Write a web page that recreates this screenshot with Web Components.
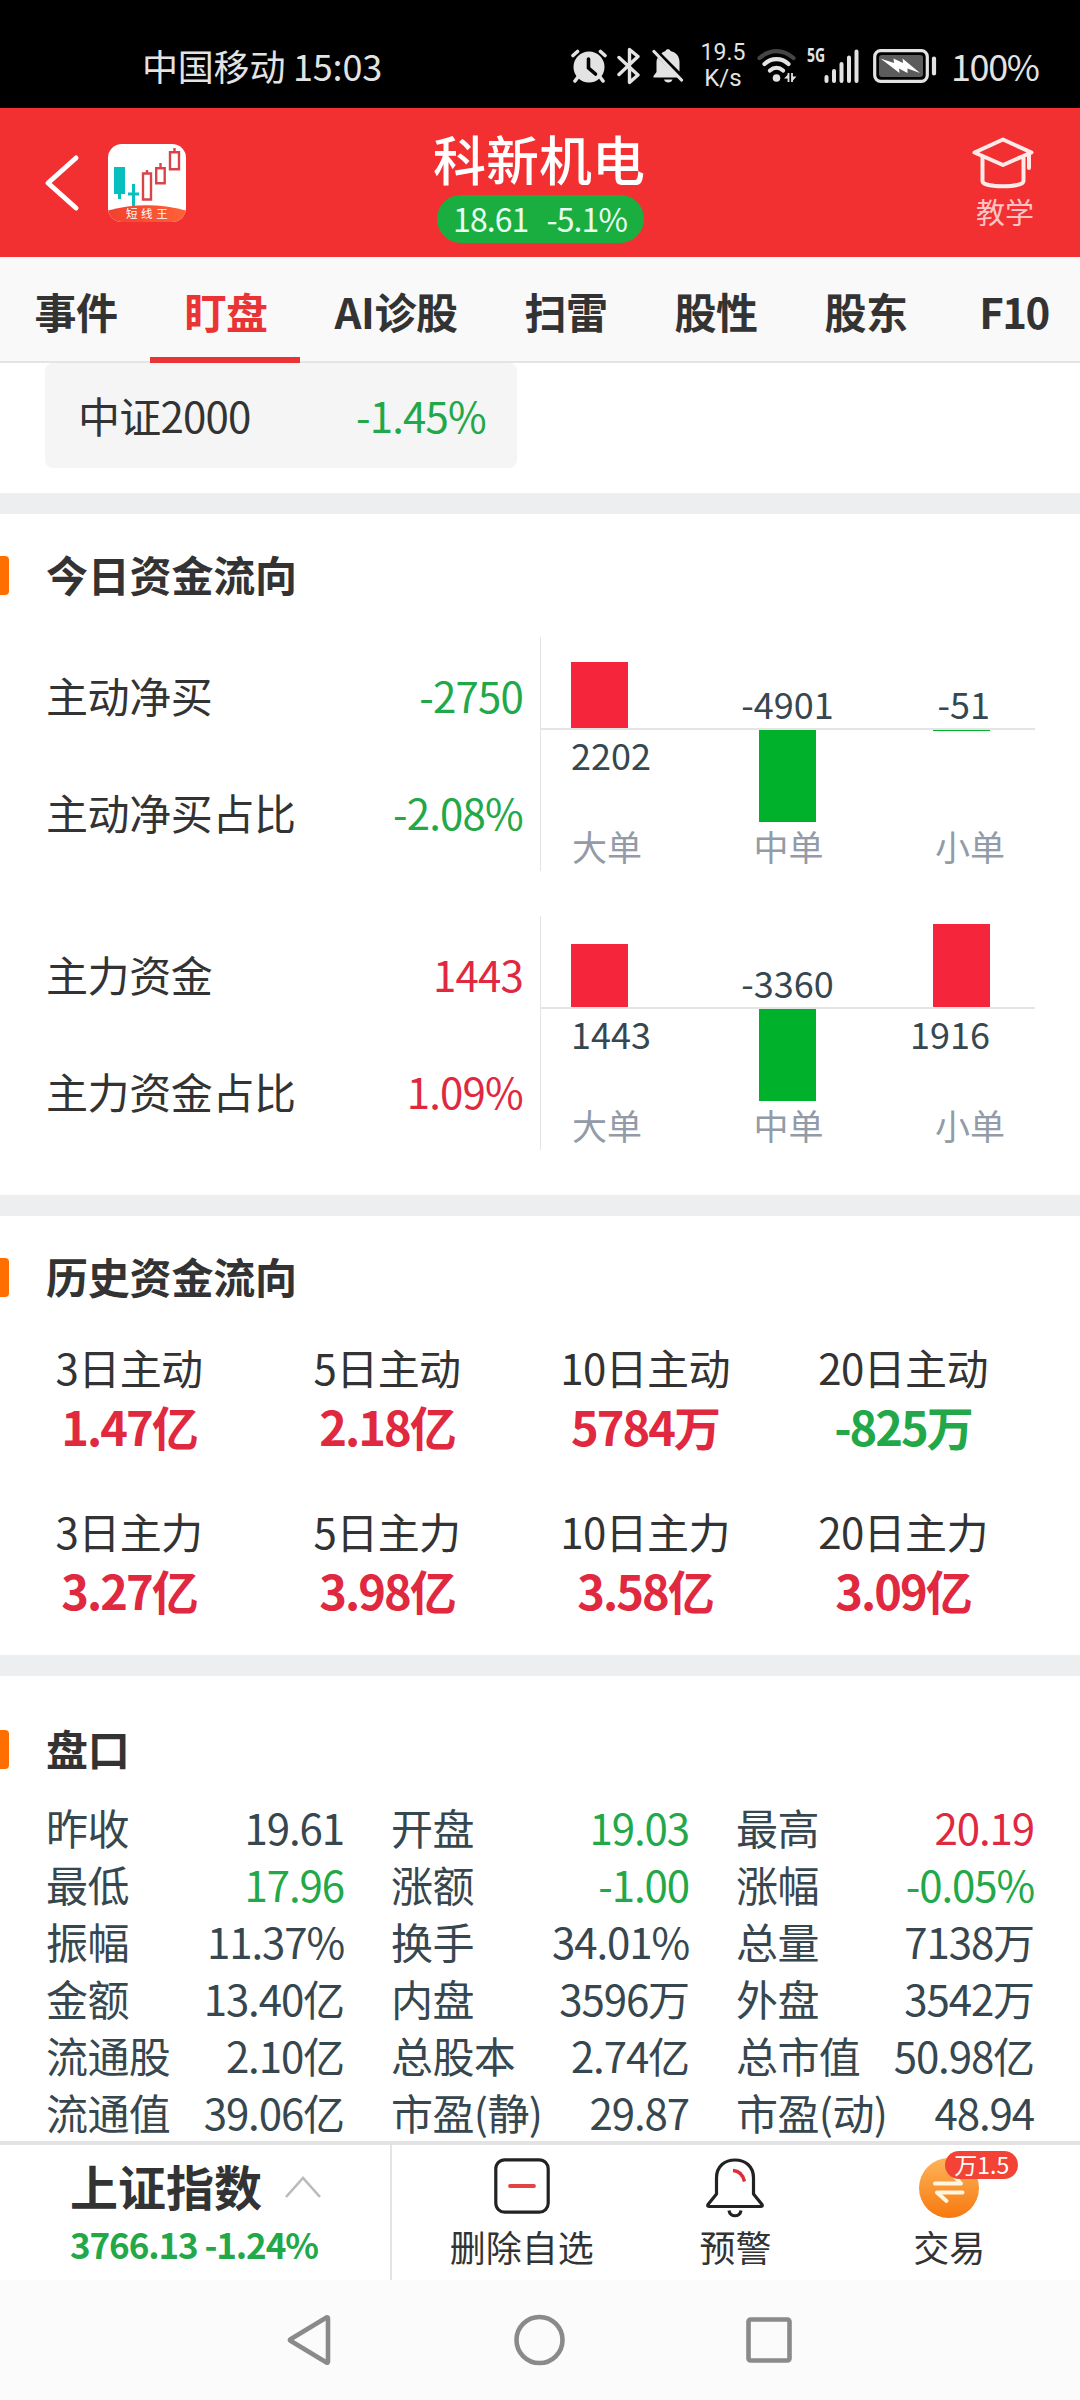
<!DOCTYPE html>
<html lang="zh-CN">
<head>
<meta charset="utf-8">
<title>科新机电</title>
<style>
  html, body {
    margin: 0;
    padding: 0;
  }

  body {
    width: 1080px;
    height: 2400px;
    display: flex;
    flex-direction: column;
    overflow: hidden;
    background: #fff;
    color: #333;
    font-family: "Noto Sans CJK SC", sans-serif;
    font-size: 42px;
    --up: #e0283f;
    --down: #22a848;
    --line: #e4e4e4;
  }

  main {
    height: 1778px;
    flex: none;
    overflow: hidden;
  }

  .history {
    display: grid;
    grid-template-columns: repeat(4, 258px);
    row-gap: 44px;
    padding-top: 39px;
  }

  .quotes {
    display: grid;
    grid-template-columns: repeat(3, 300px);
    column-gap: 45px;
    padding: 29px 45px 0;
  }

  .flows {
    display: flex;
    flex-direction: column;
    gap: 45px;
    padding: 42px 45px 0;
  }
</style>
</head>
<body>
<status-bar></status-bar>
<page-header name="科新机电" price="18.61" change="-5.1%"></page-header>
<tab-bar>
  <tab-item>事件</tab-item>
  <tab-item active>盯盘</tab-item>
  <tab-item wide>AI诊股</tab-item>
  <tab-item>扫雷</tab-item>
  <tab-item>股性</tab-item>
  <tab-item>股东</tab-item>
  <tab-item style="letter-spacing: -1.5px; padding-right: 4px">F10</tab-item>
</tab-bar>
<main>
  <index-card name="中证2000" value="-1.45%"></index-card>
  <section-block heading="今日资金流向" style="height: 681px">
    <div class="flows">
      <flow-panel>
        <flow-row name="主动净买" value="-2750"></flow-row>
        <flow-row name="主动净买占比" value="-2.08%"></flow-row>
        <flow-chart slot="chart" values="2202,-4901,-51" heights="66,92,1"></flow-chart>
      </flow-panel>
      <flow-panel>
        <flow-row name="主力资金" value="1443"></flow-row>
        <flow-row name="主力资金占比" value="1.09%"></flow-row>
        <flow-chart slot="chart" values="1443,-3360,1916" heights="63,92,83"></flow-chart>
      </flow-panel>
    </div>
  </section-block>
  <section-block heading="历史资金流向" style="height: 439px">
    <div class="history">
      <history-item name="3日主动" value="1.47亿"></history-item>
      <history-item name="5日主动" value="2.18亿"></history-item>
      <history-item name="10日主动" value="5784万"></history-item>
      <history-item name="20日主动" value="-825万"></history-item>
      <history-item name="3日主力" value="3.27亿"></history-item>
      <history-item name="5日主力" value="3.98亿"></history-item>
      <history-item name="10日主力" value="3.58亿"></history-item>
      <history-item name="20日主力" value="3.09亿"></history-item>
    </div>
  </section-block>
  <section-block heading="盘口" style="--head-top: 54px">
    <div class="quotes">
      <quote-item name="昨收" value="19.61"></quote-item>
      <quote-item name="开盘" value="19.03" trend="down"></quote-item>
      <quote-item name="最高" value="20.19" trend="up"></quote-item>
      <quote-item name="最低" value="17.96" trend="down"></quote-item>
      <quote-item name="涨额" value="-1.00" trend="down"></quote-item>
      <quote-item name="涨幅" value="-0.05%" trend="down"></quote-item>
      <quote-item name="振幅" value="11.37%"></quote-item>
      <quote-item name="换手" value="34.01%"></quote-item>
      <quote-item name="总量" value="7138万"></quote-item>
      <quote-item name="金额" value="13.40亿"></quote-item>
      <quote-item name="内盘" value="3596万"></quote-item>
      <quote-item name="外盘" value="3542万"></quote-item>
      <quote-item name="流通股" value="2.10亿"></quote-item>
      <quote-item name="总股本" value="2.74亿"></quote-item>
      <quote-item name="总市值" value="50.98亿"></quote-item>
      <quote-item name="流通值" value="39.06亿"></quote-item>
      <quote-item name="市盈(静)" value="29.87"></quote-item>
      <quote-item name="市盈(动)" value="48.94"></quote-item>
    </div>
  </section-block>
</main>
<bottom-bar></bottom-bar>
<nav-bar></nav-bar>

<script>
// width, height and body of every icon
const icons = {
  alarm: [36, 34, `
    <circle cx="18" cy="18" r="15.500" fill="#e3e3e3"/>
    <path d="M2 6.500 6.500 2.500M29.500 2.500 34 6.500" stroke="#e3e3e3" stroke-width="3.600" stroke-linecap="round"/>
    <path d="M7 28 4 32M29 28l3 4" stroke="#e3e3e3" stroke-width="3.600" stroke-linecap="round"/>
    <path d="M17.500 10v9l7 6" stroke="#000" stroke-width="3.600" stroke-linecap="round" fill="none"/>`],
  bluetooth: [24, 38, `
    <path d="M2 10.500 21 28 12.500 35.500V2.500L21 9.500 2 27.500" stroke="#e3e3e3" stroke-width="3.400" stroke-linejoin="round" stroke-linecap="round" fill="none"/>`],
  mute: [32, 36, `
    <path d="M1.500 29.500V28L4.500 24V14.500c0-2 .5-3.500 1.200-5L26.500 29.500z" fill="#e3e3e3"/>
    <path d="M9.500 5.500C10.500 4 12 3.500 13.500 3 13.800.5 18.200.5 18.500 3 24.500 4.500 27.500 8.500 27.500 14.500v9z" fill="#e3e3e3"/>
    <path d="M12 31.500h8.500c-.8 4-7.700 4-8.500 0z" fill="#e3e3e3"/>
    <path d="M3.500 1.500 31.500 31" stroke="#000" stroke-width="2.500"/>
    <path d="M2 3.500 29.500 32" stroke="#e3e3e3" stroke-width="3.200" stroke-linecap="round"/>`],
  wifi: [42, 36, `
    <path d="M2.500 10C13 .7 26 .7 36.500 10" stroke="#454545" stroke-width="4.200" fill="none" stroke-linecap="round"/>
    <path d="M7.500 16c7-6.500 17-6.500 24 0M13 22.500c4-3.500 9-3.500 13 0" stroke="#e3e3e3" stroke-width="4.200" fill="none" stroke-linecap="round"/>
    <circle cx="19.500" cy="30" r="3.800" fill="#e3e3e3"/>
    <path d="M31.500 25v9M35 25v9" stroke="#e3e3e3" stroke-width="1.800"/>
    <path d="M31.500 26v4.500H27zM35 33.500V28.500h4.500z" fill="#e3e3e3"/>`],
  signal: [36, 35, `
    <path d="M2.500 28v4M10 22v10M17.500 15v17M25 8.500V32M32.500 2.500V32" stroke="#e3e3e3" stroke-width="4" stroke-linecap="round"/>`],
  battery: [64, 34, `
    <rect x="1.700" y="1.700" width="52.600" height="30.600" rx="6" fill="none" stroke="#e3e3e3" stroke-width="3.200"/>
    <rect x="6" y="6" width="44" height="22" rx="3" fill="#5c5c5c"/>
    <path d="M7.500 9.500 21 14 20.500 9.500 30 14 29.500 9.500 47 24 34.500 19.500V24l-8.500-4.500.5 4.500z" fill="#fff"/>
    <path d="M61 9.500v15" stroke="#e3e3e3" stroke-width="4.200" stroke-linecap="round"/>`],
  back: [36, 58, `
    <path d="M32 4 4 29l28 25" stroke="#fff" stroke-width="5" fill="none" stroke-linecap="round" stroke-linejoin="round"/>`],
  logo: [78, 78, `
    <defs>
      <clipPath id="r"><rect width="78" height="78" rx="14"/></clipPath>
      <linearGradient id="g"><stop offset="0" stop-color="#f2402f"/><stop offset="1" stop-color="#ff6236"/></linearGradient>
    </defs>
    <g clip-path="url(#r)">
      <rect width="78" height="78" fill="#fff"/>
      <path d="M6 23h11v27h-4v5h-3v-5H6zM24 40h3v8.500h4v3h-4V63h-3V51.500h-4v-3h4z" fill="#08bfc0"/>
      <path d="M0 66.500Q39 56 78 66.500V78H0z" fill="url(#g)"/>
      <path d="M35 29.500h8v26h-8zM39 29v-3M48.200 24.200h8.500v15h-8.500zM52.500 24v-5M62 8.200h9v17h-9zM66.500 8V4" stroke="#d94448" stroke-width="2.400" fill="none"/>
      <text x="18" y="74" font-size="11.500" letter-spacing="3.600" fill="#fff">短线王</text>
    </g>`],
  teach: [62, 52, `
    <path d="M2.500 15.500 31 2.500l28.500 13L31 28z M10.500 20v24c0 7 41 7 41 0V20M57 17v14" stroke="#ffeaea" stroke-width="4" fill="none" stroke-linejoin="round" stroke-linecap="round"/>`],
  up: [38, 24, `
    <path d="M2 22 19 3l17 19" stroke="#bbb" stroke-width="2.600" fill="none"/>`],
  remove: [56, 56, `
    <rect x="1.800" y="1.800" width="52.400" height="52.400" rx="9" fill="none" stroke="#222" stroke-width="3.200"/>
    <path d="M16 28h24" stroke="#e24444" stroke-width="3.800" stroke-linecap="round"/>`],
  bell: [58, 60, `
    <path d="M10.500 36V20C10.500 8 19 2 29 2S47.500 8 47.500 20V36l8.500 10.500q1 2-1.500 2H3.500q-2.500 0-1.500-2z" stroke="#222" stroke-width="3.200" fill="none" stroke-linejoin="round"/>
    <path d="M23 52.500c1 7 11 7 12 0" stroke="#222" stroke-width="3.200" fill="none"/>
    <path d="M27 12.500q9 .5 11.500 11" stroke="#e02c33" stroke-width="3.400" fill="none"/>`],
  trade: [60, 60, `
    <defs><linearGradient id="o" x2="0" y2="1"><stop offset="0" stop-color="#fdb45a"/><stop offset="1" stop-color="#f7780f"/></linearGradient></defs>
    <circle cx="30" cy="30" r="30" fill="url(#o)"/>
    <path d="M16 25.500H42L34 17M43.500 34.500H18l9.500 8.500" stroke="#fff6e0" stroke-width="4" fill="none" stroke-linecap="round" stroke-linejoin="round"/>`],
  navBack: [44, 52, `
    <path d="M39.500 3.500 3.500 25.200Q2.200 26 3.500 26.800l36 21.700q1.500.5 1.500-1v-43q0-1.500-1.500-1z" stroke="#8a8a8a" stroke-width="4.600" fill="none" stroke-linejoin="round"/>`],
  navHome: [52, 52, `
    <circle cx="26.500" cy="26" r="23" stroke="#8a8a8a" stroke-width="4.600" fill="none"/>`],
  navRecent: [46, 46, `
    <rect x="2.500" y="2.500" width="41" height="41" rx="2" stroke="#8a8a8a" stroke-width="4.600" fill="none"/>`],
};

// "-" in front of a number means it fell
const trendColor = value => value.startsWith("-") ? "var(--down)" : "var(--up)";

class BaseElement extends HTMLElement {
  constructor() {
    super();
    this.attachShadow({mode: "open"});
  }

  connectedCallback() {
    this.shadowRoot.innerHTML = this.render();
  }

  attr(name) {
    return this.getAttribute(name) || "";
  }
}

class UiIcon extends BaseElement {
  render() {
    const [w, h, body] = icons[this.attr("name")];
    return `
      <style>
        :host { display: block; flex: none; width: ${w}px; height: ${h}px; }
        svg { display: block; }
      </style>
      <svg width="${w}" height="${h}" viewBox="0 0 ${w} ${h}" fill="none">${body}</svg>`;
  }
}

class StatusBar extends BaseElement {
  render() {
    return `
      <style>
        :host {
          display: flex;
          flex: none;
          box-sizing: border-box;
          height: 108px;
          padding: 24px 40px 0 142px;
          align-items: center;
          background: #000;
          color: #e3e3e3;
          font-size: 36px;
          line-height: 1;
        }
        .carrier { width: 429px; white-space: pre; padding-bottom: 3px; box-sizing: border-box; letter-spacing: -0.2px; }
        .speed {
          width: 46px;
          margin-left: 16px;
          text-align: center;
          font: 400 24px/24px Roboto, sans-serif;
        }
        .speed div { height: 24px; }
        .speed div:first-child { font-size: 23px; line-height: 22px; }
        .net {
          align-self: flex-start;
          width: 18px;
          margin: 21px 0 0 8px;
          font: 700 20px/20px "Open Sans", sans-serif;
        }
        .net span { display: block; width: 25px; transform: scaleX(0.7); transform-origin: 0 0; }
        .percent { margin-left: 14px; padding-bottom: 2px; letter-spacing: -1.4px; }
      </style>
      <div class="carrier">中国移动 15:03</div>
      <ui-icon name="alarm"></ui-icon>
      <ui-icon name="bluetooth" style="margin-left: 10px"></ui-icon>
      <ui-icon name="mute" style="margin-left: 11px"></ui-icon>
      <div class="speed"><div>19.5</div><div>K/s</div></div>
      <ui-icon name="wifi" style="margin-left: 11px"></ui-icon>
      <div class="net"><span>5G</span></div>
      <ui-icon name="signal" style="margin-left: -1px"></ui-icon>
      <ui-icon name="battery" style="margin-left: 13px"></ui-icon>
      <div class="percent">100%</div>`;
  }
}

class PageHeader extends BaseElement {
  render() {
    return `
      <style>
        :host {
          display: grid;
          grid-template-columns: 1fr auto 1fr;
          flex: none;
          height: 149px;
          background: #f23032;
          color: #fff;
        }
        .left { display: flex; align-items: center; gap: 28px; padding: 1px 0 0 44px; }
        .center { display: flex; flex-direction: column; align-items: center; }
        .name { margin: 18px 2px 0 0; font-size: 53px; line-height: 64px; font-weight: 500; }
        .pill {
          display: flex;
          box-sizing: border-box;
          gap: 18px;
          justify-content: center;
          width: 207px;
          height: 48px;
          margin-top: 5px;
          border-radius: 24px;
          background: #19ae3f;
          font-size: 32px;
          line-height: 46px;
          letter-spacing: -0.9px;
          color: #e9fff0;
        }
        .right { display: flex; flex-direction: column; align-items: flex-end; padding: 29px 46px 0 0; }
        .teach { margin-top: 3px; font-size: 29px; line-height: 38px; font-weight: 400; color: #fcc4c4; }
      </style>
      <div class="left"><ui-icon name="back"></ui-icon><ui-icon name="logo"></ui-icon></div>
      <div class="center">
        <div class="name">${this.attr("name")}</div>
        <div class="pill"><span>${this.attr("price")}</span><span>${this.attr("change")}</span></div>
      </div>
      <div class="right"><ui-icon name="teach"></ui-icon><div class="teach">教学</div></div>`;
  }
}

class TabBar extends BaseElement {
  render() {
    return `
      <style>
        :host {
          display: flex;
          flex: none;
          box-sizing: border-box;
          height: 106px;
          overflow: hidden;
          background: #f9f9f9;
          box-shadow: inset 0 -2px #e4e4e4;
        }
      </style>
      <slot></slot>`;
  }
}

class TabItem extends BaseElement {
  render() {
    return `
      <style>
        :host {
          display: block;
          flex: none;
          box-sizing: border-box;
          width: 150px;
          height: 106px;
          padding-left: 2px;
          text-align: center;
          font-size: 42px;
          font-weight: 700;
          line-height: 107px;
          letter-spacing: -0.5px;
        }
        :host([wide]) { width: 190px; }
        :host([active]) { color: #e93335; border-bottom: 6px solid #e93335; }
      </style>
      <slot></slot>`;
  }
}

class IndexCard extends BaseElement {
  render() {
    return `
      <style>
        :host { display: block; height: 130px; }
        .card {
          display: flex;
          box-sizing: border-box;
          justify-content: space-between;
          width: 472px;
          height: 105px;
          margin-left: 45px;
          padding: 0 31px 0 33px;
          border-radius: 8px;
          background: #f5f5f5;
          line-height: 103px;
          letter-spacing: -0.8px;
        }
        .value { color: var(--down); }
      </style>
      <div class="card"><span>${this.attr("name")}</span><span class="value">${this.attr("value")}</span></div>`;
  }
}

class SectionBlock extends BaseElement {
  render() {
    return `
      <style>
        :host {
          display: block;
          box-sizing: content-box;
          border-top: 21px solid #edeef0;
        }
        .head { display: flex; padding-top: var(--head-top, 42px); height: 39px; }
        .mark { width: 9px; border-radius: 0 4px 4px 0; background: #ff6f00; }
        .text { margin-left: 37px; font-weight: 700; line-height: 36px; letter-spacing: -0.2px; }
      </style>
      <div class="head"><div class="mark"></div><div class="text">${this.attr("heading")}</div></div>
      <slot></slot>`;
  }
}

class FlowPanel extends BaseElement {
  render() {
    return `
      <style>
        :host { display: flex; height: 234px; }
        .rows { width: 478px; }
        .chart { margin-left: 17px; }
      </style>
      <div class="rows"><slot></slot></div>
      <div class="chart"><slot name="chart"></slot></div>`;
  }
}

class FlowRow extends BaseElement {
  render() {
    const value = this.attr("value");
    return `
      <style>
        :host { display: flex; justify-content: space-between; height: 117px; line-height: 115px; }
        .name { padding-left: 1px; letter-spacing: -0.4px; }
        .value { color: ${trendColor(value)}; letter-spacing: -0.8px; }
      </style>
      <span class="name">${this.attr("name")}</span><span class="value">${value}</span>`;
  }
}

class FlowChart extends BaseElement {
  render() {
    const values = this.attr("values").split(",");
    const heights = this.attr("heights").split(",");
    const bar = i => `<div class="bar" style="height: ${heights[i]}px"></div>`;
    const label = v => `<div class="num">${v}</div>`;
    const rising = v => !v.startsWith("-");
    return `
      <style>
        :host {
          display: block;
          box-sizing: border-box;
          width: 495px;
          height: 234px;
          border-left: 1px solid var(--line);
          color: #37474f;
          font-size: 36px;
          line-height: 50px;
        }
        .band { display: flex; padding-left: 30px; }
        .above { height: 91px; border-bottom: 2px solid var(--line); align-items: flex-end; }
        .below { height: 92px; }
        .col { display: flex; flex-direction: column; width: 57px; white-space: nowrap; }
        .col:nth-child(2) { align-items: center; margin-left: 131px; }
        .col:nth-child(3) { align-items: flex-end; margin-left: 117px; }
        .bar { width: 57px; }
        .above .bar { background: #f5253b; }
        .below .bar { background: #00b12c; }
        .below .num { line-height: 48px; }
        .caps { display: flex; justify-content: space-between; padding: 0 30px 0 31px; color: #929ba7; line-height: 48px; font-size: 35px; }
      </style>
      <div class="band above">
        ${values.map((v, i) => `<div class="col">${rising(v) ? bar(i) : label(v)}</div>`).join("")}
      </div>
      <div class="band below">
        ${values.map((v, i) => `<div class="col">${rising(v) ? label(v) : bar(i)}</div>`).join("")}
      </div>
      <div class="caps"><span>大单</span><span>中单</span><span>小单</span></div>`;
  }
}

class HistoryItem extends BaseElement {
  render() {
    const value = this.attr("value");
    return `
      <style>
        :host { display: block; text-align: center; line-height: 60px; }
        .name { letter-spacing: -0.6px; position: relative; top: 1px; }
        .value { font-size: 47px; font-weight: 700; letter-spacing: -2px; color: ${trendColor(value)}; }
      </style>
      <div class="name">${this.attr("name")}</div>
      <div class="value">${value}</div>`;
  }
}

class QuoteItem extends BaseElement {
  render() {
    const trend = this.attr("trend");
    return `
      <style>
        :host { display: flex; justify-content: space-between; height: 57px; line-height: 57px; color: #37474f; white-space: nowrap; }
        .name { padding-left: 1px; letter-spacing: -0.6px; }
        .value { letter-spacing: -1.1px; padding-right: 1px; ${trend ? `color: var(--${trend});` : ""} }
      </style>
      <span class="name">${this.attr("name")}</span><span class="value">${this.attr("value")}</span>`;
  }
}

class BottomBar extends BaseElement {
  render() {
    return `
      <style>
        :host {
          display: flex;
          flex: none;
          height: 135px;
          border-top: 4px solid #e3e3e3;
          background: #fff;
        }
        .index { box-sizing: border-box; width: 392px; padding-left: 70px; border-right: 2px solid #e4e4e4; }
        .line { display: flex; align-items: center; height: 58px; padding-top: 11px; font-size: 48px; font-weight: 700; }
        .line ui-icon { margin: 4px 0 0 22px; }
        .price { color: var(--down); font-size: 35px; font-weight: 700; line-height: 60px; letter-spacing: -1.1px; }
        .actions { display: grid; grid-template-columns: repeat(3, 1fr); flex: 1; padding: 0 24px 0 23px; }
        .action { position: relative; display: flex; flex-direction: column; align-items: center; padding-top: 13px; font-size: 36px; }
        .action ui-icon { height: 62px; }
        .action span { line-height: 53px; }
        .badge {
          position: absolute;
          left: 103px;
          top: 6px;
          width: 73px;
          height: 28px;
          border-radius: 14px;
          background: #f34336;
          color: #fff;
          font-size: 23px;
          line-height: 26px;
          text-align: center;
        }
      </style>
      <div class="index">
        <div class="line">上证指数<ui-icon name="up"></ui-icon></div>
        <div class="price">3766.13 -1.24%</div>
      </div>
      <div class="actions">
        <div class="action"><ui-icon name="remove"></ui-icon><span>删除自选</span></div>
        <div class="action"><ui-icon name="bell"></ui-icon><span>预警</span></div>
        <div class="action"><ui-icon name="trade"></ui-icon><span>交易</span><div class="badge">万1.5</div></div>
      </div>`;
  }
}

class NavBar extends BaseElement {
  render() {
    return `
      <style>
        :host {
          display: flex;
          flex: none;
          height: 120px;
          justify-content: space-between;
          align-items: center;
          box-sizing: border-box;
          padding: 0 288px 0 287px;
          background: #fbfbfb;
        }
      </style>
      <ui-icon name="navBack"></ui-icon>
      <ui-icon name="navHome"></ui-icon>
      <ui-icon name="navRecent"></ui-icon>`;
  }
}

customElements.define("ui-icon", UiIcon);
customElements.define("status-bar", StatusBar);
customElements.define("page-header", PageHeader);
customElements.define("tab-bar", TabBar);
customElements.define("tab-item", TabItem);
customElements.define("index-card", IndexCard);
customElements.define("section-block", SectionBlock);
customElements.define("flow-panel", FlowPanel);
customElements.define("flow-row", FlowRow);
customElements.define("flow-chart", FlowChart);
customElements.define("history-item", HistoryItem);
customElements.define("quote-item", QuoteItem);
customElements.define("bottom-bar", BottomBar);
customElements.define("nav-bar", NavBar);
</script>
</body>
</html>
